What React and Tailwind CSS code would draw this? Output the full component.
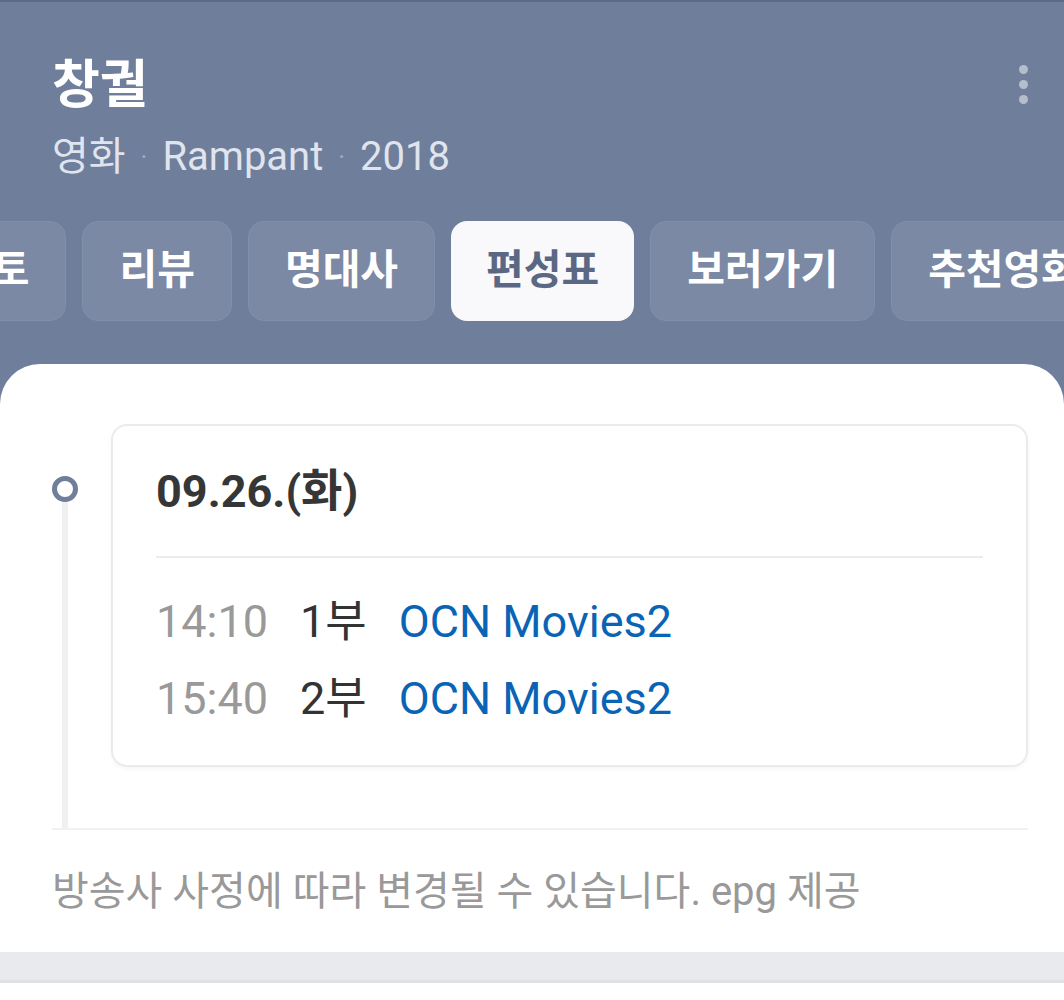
export default function App() {
  const font = { fontFamily: 'Roboto, "Noto Sans CJK KR", "Noto Sans", sans-serif' };
  const tabs = [
    { label: "포토" },
    { label: "리뷰" },
    { label: "명대사" },
    { label: "편성표", active: true },
    { label: "보러가기" },
    { label: "추천영화" },
  ];
  return (
    <div style={font} className="w-[1064px] h-[1000px] overflow-hidden bg-[#6f7e9a] flex flex-col">
      <div className="h-[2px] bg-[#5c6a86]" />
      {/* Header */}
      <div className="relative px-[52px] pt-[52px]">
        <div className="text-[52px] leading-[64px] font-bold text-white">창궐</div>
        <div className="mt-[14px] flex items-center text-[40px] leading-[50px] text-[#dfe4ee]">
          <span>영화</span>
          <span className="mx-[15px] text-[#a3adc1] text-[26px]">·</span>
          <span>Rampant</span>
          <span className="mx-[15px] text-[#a3adc1] text-[26px]">·</span>
          <span>2018</span>
        </div>
        <div className="absolute right-[36px] top-[63px] flex flex-col gap-[6px]">
          <span className="w-[9px] h-[9px] rounded-full bg-[#b5bdcd]" />
          <span className="w-[9px] h-[9px] rounded-full bg-[#b5bdcd]" />
          <span className="w-[9px] h-[9px] rounded-full bg-[#b5bdcd]" />
        </div>
      </div>
      {/* Tabs */}
      <div className="mt-[39px] flex gap-[16px] -ml-[83px] whitespace-nowrap">
        {tabs.map((t) => (
          <div
            key={t.label}
            className={
              t.active
                ? "shrink-0 h-[100px] px-[35px] flex items-center rounded-[16px] bg-[#f9f9fb] text-[#5b6883] text-[41px] font-bold"
                : "shrink-0 h-[100px] px-[36px] flex items-center rounded-[16px] bg-[#7b89a4] border border-[#8190aa] text-white text-[41px] font-semibold"
            }
          >
            {t.label}
          </div>
        ))}
      </div>
      {/* White panel */}
      <div className="mt-[43px] h-[588px] shrink-0 bg-white rounded-t-[40px] pl-[52px] pr-[36px] pt-[60px]">
        <div className="flex border-b-2 border-[#f1f1f3]">
          <div className="w-[26px] flex flex-col items-center">
            <div className="mt-[52px] w-[26px] h-[26px] rounded-full border-[5px] border-[#6f7e9a] bg-white" />
            <div className="flex-1 w-[6px] bg-[#eef0f2]" />
          </div>
          <div className="flex-1 ml-[33px] mb-[61px] rounded-[16px] border-2 border-[#ebebee] shadow-[0_2px_4px_rgba(0,0,0,0.04)] px-[43px] pt-[36px] pb-[28px]">
            <div className="text-[45px] leading-[60px] font-bold text-[#363636]">09.26.(화)</div>
            <div className="mt-[34px] h-[2px] bg-[#ececee]" />
            <div className="mt-[25px] flex flex-col text-[45px] leading-[77px]">
              <div className="flex gap-[32px]">
                <span className="text-[#999999]">14:10</span>
                <span className="text-[#333333]">1부</span>
                <span className="text-[#0a64b5]">OCN Movies2</span>
              </div>
              <div className="flex gap-[32px]">
                <span className="text-[#999999]">15:40</span>
                <span className="text-[#333333]">2부</span>
                <span className="text-[#0a64b5]">OCN Movies2</span>
              </div>
            </div>
          </div>
        </div>
        <div className="pt-[36px] text-[40px] leading-[52px] text-[#999999]">
          방송사 사정에 따라 변경될 수 있습니다. epg 제공
        </div>
      </div>
      <div className="h-[31px] shrink-0 bg-[#e8eaed] border-b-[3px] border-[#dfe1e5]" />
      <div className="flex-1 bg-white" />
    </div>
  );
}
